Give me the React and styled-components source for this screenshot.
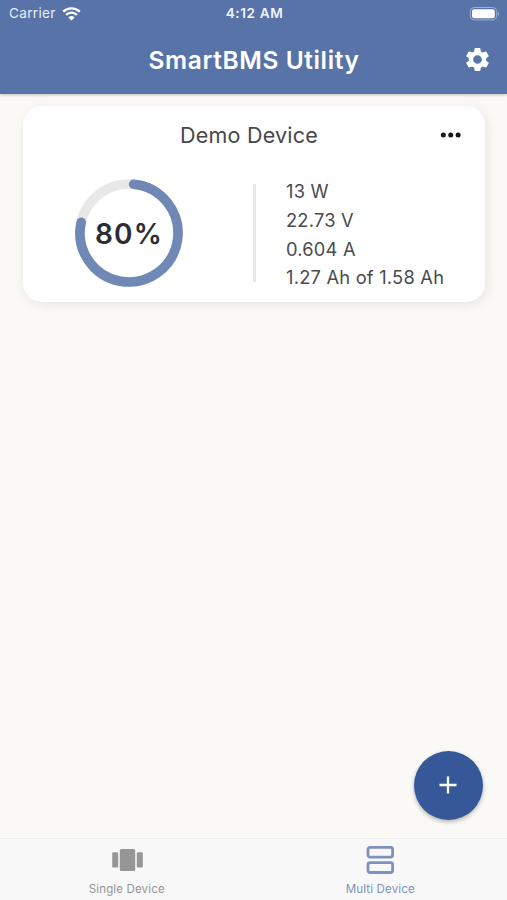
import React from "react";
import styled, { createGlobalStyle } from "styled-components";
import { MdSettings } from "react-icons/md";

const GlobalStyle = createGlobalStyle`
  * {
    box-sizing: border-box;
  }
  body {
    margin: 0;
    background: #faf9f6;
    font-family: Inter, "Liberation Sans", sans-serif;
  }
`;

const Screen = styled.div`
  height: 900px;
  display: flex;
  flex-direction: column;
  overflow: hidden;
`;

const Header = styled.header`
  height: 94px;
  flex: none;
  background: #5873a8;
  color: #fff;
  box-shadow: 0 1px 3px rgba(0, 0, 0, 0.22);
`;

const StatusBar = styled.div`
  height: 27px;
  padding: 0 7px 0 9px;
  display: grid;
  grid-template-columns: 1fr auto 1fr;
  align-items: center;
  font-size: 13.6px;
  line-height: 27px;
`;

const Carrier = styled.div`
  display: flex;
  align-items: center;
  gap: 6px;
  color: #e9eefa;
  letter-spacing: 0.3px;
`;

const Clock = styled.div`
  font-weight: 600;
  font-size: 13.6px;
  letter-spacing: 0.6px;
  color: #eef2fb;
`;

const BatterySlot = styled.div`
  display: flex;
  justify-content: flex-end;
`;

const TitleBar = styled.div`
  height: 65px;
  padding: 0 15px;
  display: grid;
  grid-template-columns: 29px 1fr 29px;
  align-items: center;
`;

const Title = styled.h1`
  grid-column: 2;
  margin: 0;
  font-size: 24.5px;
  line-height: 30px;
  font-weight: 600;
  letter-spacing: 0.6px;
  text-indent: 1px;
  text-align: center;
  white-space: nowrap;
`;

const IconButton = styled.button`
  display: flex;
  padding: 0;
  border: 0;
  background: none;
  color: ${({ $color }) => $color || "inherit"};
`;

const Content = styled.main`
  flex: 1;
  padding: 12px 22px 18px 23px;
  display: flex;
  flex-direction: column;
  justify-content: space-between;
`;

const Card = styled.section`
  width: 462px;
  height: 196px;
  border-radius: 19px;
  background: #fff;
  box-shadow: 2px 3px 12px rgba(0, 0, 0, 0.08);
`;

const CardHeader = styled.div`
  height: 58px;
  padding: 0 23px;
  display: grid;
  grid-template-columns: 22px 1fr 22px;
  align-items: center;
`;

const CardTitle = styled.h2`
  grid-column: 2;
  margin: 0 10px 0 0;
  font-size: 21.5px;
  font-weight: 400;
  letter-spacing: 0.2px;
  color: #46474b;
  text-align: center;
`;

const CardBody = styled.div`
  display: grid;
  grid-template-columns: 230px 3px 1fr;
  padding-top: 12px;
`;

const GaugeCell = styled.div`
  display: flex;
  justify-content: center;
  padding: 3px 18px 0 0;
`;

const Gauge = styled.div`
  display: grid;
  place-items: center;
  width: 108px;
  height: 108px;

  > * {
    grid-area: 1 / 1;
  }
`;

const Percent = styled.span`
  padding-top: 2px;
  font-size: 28px;
  font-weight: 600;
  letter-spacing: 1.1px;
  color: #2b2c36;
`;

const Divider = styled.div`
  height: 98px;
  margin-top: 8px;
  background: #e7e7e8;
`;

const Readings = styled.ul`
  margin: 0;
  padding: 1px 0 0 30px;
  list-style: none;
  font-size: 18.3px;
  line-height: 28.8px;
  letter-spacing: 0.22px;
  color: #4a4b4f;
  white-space: nowrap;
`;

const AddButton = styled.button`
  align-self: flex-end;
  margin-right: 2px;
  width: 69px;
  height: 69px;
  padding: 0 1px 1px 0;
  display: grid;
  place-items: center;
  border: 0;
  border-radius: 50%;
  background: #375898;
  box-shadow: 0 2px 4px rgba(0, 0, 0, 0.28);
`;

const TabBar = styled.nav`
  height: 62px;
  flex: none;
  display: grid;
  grid-template-columns: 1fr 1fr;
  border-top: 1px solid #eeeeec;
  background: #f8f8f8;
`;

const Tab = styled.a`
  display: flex;
  flex-direction: column;
  align-items: center;
  padding-top: 6px;
  font-size: 11.5px;
  line-height: 14px;
  letter-spacing: 0.15px;
  color: ${({ $active }) => ($active ? "#7d92bd" : "#969696")};

  svg {
    margin-bottom: 7px;
  }
`;

const readings = ["13 W", "22.73 V", "0.604 A", "1.27 Ah of 1.58 Ah"];

function WifiIcon() {
  return (
    <svg width="19" height="14" viewBox="0 0 19 14" fill="none">
      <path d="M1.2 4.7a12 12 0 0 1 16.6 0" stroke="#fff" strokeWidth="2.4" />
      <path d="M4.1 7.9a7.7 7.7 0 0 1 10.8 0" stroke="#fff" strokeWidth="2.3" />
      <path d="M9.5 13.6 6.4 10.4a4.5 4.5 0 0 1 6.2 0Z" fill="#fff" />
    </svg>
  );
}

function BatteryIcon() {
  return (
    <svg width="31" height="14" viewBox="0 0 31 14" fill="none">
      <rect x="1.3" y="0.5" width="26.3" height="12.4" rx="3.8" stroke="#9fb0d3" />
      <rect x="3" y="2.2" width="22.8" height="9" rx="2.2" fill="#fff" />
      <path d="M29 4.6c1.7.8 1.7 3.4 0 4.2Z" fill="#9fb0d3" />
    </svg>
  );
}

function Ring() {
  return (
    <svg width="108" height="108" viewBox="0 0 108 108" fill="none" strokeWidth="9.6">
      <circle cx="54" cy="54" r="49" stroke="#e8e8e8" />
      <path
        d="M58.7 5.2A49 49 0 1 1 6.2 43.2"
        stroke="#6f88b5"
        strokeLinecap="round"
      />
    </svg>
  );
}

function MoreIcon() {
  return (
    <svg width="22" height="6" viewBox="0 0 22 6" fill="#151515">
      <circle cx="3.3" cy="3" r="2.5" />
      <circle cx="10.7" cy="3" r="2.5" />
      <circle cx="18.1" cy="3" r="2.5" />
    </svg>
  );
}

function CarouselIcon() {
  return (
    <svg width="32" height="30" viewBox="0 0 32 30" fill="currentColor">
      <rect x="1.2" y="7.2" width="6" height="15.4" rx="1.3" />
      <rect x="8.8" y="4" width="15.4" height="22" rx="1.5" />
      <rect x="25.8" y="7.2" width="6" height="15.4" rx="1.3" />
    </svg>
  );
}

function RowsIcon() {
  return (
    <svg width="30" height="30" viewBox="0 0 30 30" fill="none" stroke="currentColor" strokeWidth="2.8">
      <rect x="3" y="2.3" width="24.6" height="9.8" rx="2" />
      <rect x="3" y="17.7" width="24.6" height="9.8" rx="2" />
    </svg>
  );
}

function DeviceCard({ name, charge }) {
  return (
    <Card>
      <CardHeader>
        <CardTitle>{name}</CardTitle>
        <IconButton aria-label="More">
          <MoreIcon />
        </IconButton>
      </CardHeader>
      <CardBody>
        <GaugeCell>
          <Gauge>
            <Ring />
            <Percent>{charge}%</Percent>
          </Gauge>
        </GaugeCell>
        <Divider />
        <Readings>
          {readings.map((value) => (
            <li key={value}>{value}</li>
          ))}
        </Readings>
      </CardBody>
    </Card>
  );
}

export default function App() {
  return (
    <Screen>
      <GlobalStyle />
      <Header>
        <StatusBar>
          <Carrier>
            Carrier
            <WifiIcon />
          </Carrier>
          <Clock>4:12 AM</Clock>
          <BatterySlot>
            <BatteryIcon />
          </BatterySlot>
        </StatusBar>
        <TitleBar>
          <Title>SmartBMS Utility</Title>
          <IconButton $color="#fff" aria-label="Settings">
            <MdSettings size={29} />
          </IconButton>
        </TitleBar>
      </Header>

      <Content>
        <DeviceCard name="Demo Device" charge={80} />
        <AddButton aria-label="Add device">
          <svg width="18" height="18" viewBox="0 0 18 18" stroke="#fff" strokeWidth="2.3">
            <path d="M9 .5v17M.5 9h17" />
          </svg>
        </AddButton>
      </Content>

      <TabBar>
        <Tab>
          <CarouselIcon />
          Single Device
        </Tab>
        <Tab $active>
          <RowsIcon />
          Multi Device
        </Tab>
      </TabBar>
    </Screen>
  );
}
